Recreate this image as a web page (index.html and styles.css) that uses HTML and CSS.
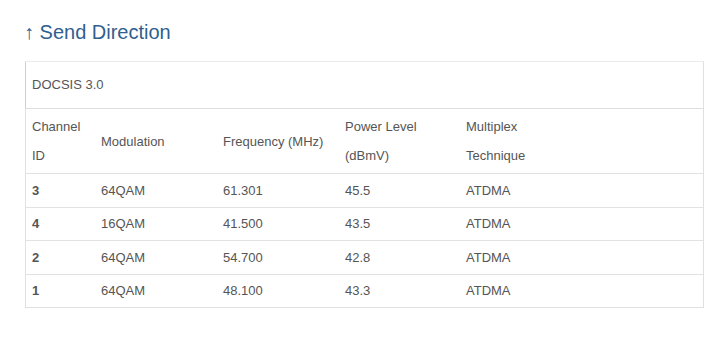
FILE: index.html
```html
<!DOCTYPE html>
<html>
<head>
<meta charset="utf-8">
<link rel="stylesheet" href="styles.css">
</head>
<body>
<div class="page">
  <h2 class="title">↑ Send Direction</h2>
  <div class="panel">
    <div class="panel-heading">DOCSIS 3.0</div>
    <table class="channels">
      <colgroup>
        <col class="c1"><col class="c2"><col class="c3"><col class="c4"><col class="c5">
      </colgroup>
      <thead>
        <tr>
          <th>Channel<br>ID</th>
          <th>Modulation</th>
          <th>Frequency (MHz)</th>
          <th>Power Level<br>(dBmV)</th>
          <th>Multiplex<br>Technique</th>
        </tr>
      </thead>
      <tbody>
        <tr><td class="id">3</td><td>64QAM</td><td>61.301</td><td>45.5</td><td>ATDMA</td></tr>
        <tr><td class="id">4</td><td>16QAM</td><td>41.500</td><td>43.5</td><td>ATDMA</td></tr>
        <tr><td class="id">2</td><td>64QAM</td><td>54.700</td><td>42.8</td><td>ATDMA</td></tr>
        <tr><td class="id">1</td><td>64QAM</td><td>48.100</td><td>43.3</td><td>ATDMA</td></tr>
      </tbody>
    </table>
  </div>
</div>
</body>
</html>
```

FILE: styles.css
```css
html, body {
  margin: 0;
  padding: 0;
  background: #fff;
}
body {
  font-family: "Liberation Sans", Arial, sans-serif;
  color: #555;
}
.page {
  padding: 20px 0 0 24px;
}
.title {
  margin: 0;
  font-size: 20px;
  line-height: 24px;
  font-weight: normal;
  color: #30608f;
}
.panel {
  margin: 17px 0 0 1px;
  width: 677px;
  border: 1px solid #e0e0e0;
  border-top-color: #ececec;
}
.panel-heading {
  height: 46px;
  line-height: 46px;
  padding: 0 6px;
  font-size: 13px;
  border-bottom: 1px solid #dedede;
  border-left: 1px solid #cfcfcf;
  margin-left: -1px;
  color: #555;
}
.channels {
  width: 100%;
  border-collapse: collapse;
  table-layout: fixed;
  font-size: 13px;
}
.c1 { width: 69px; }
.c2 { width: 122px; }
.c3 { width: 122px; }
.c4 { width: 121px; }
.channels th {
  font-weight: normal;
  text-align: left;
  vertical-align: middle;
  line-height: 29px;
  padding: 3px 6px 3px;
  color: #555;
}
.channels td {
  line-height: 20px;
  padding: 6.5px 6px 6px;
  border-top: 1px solid #e2e2e2;
  color: #555;
}
.channels td.id {
  font-weight: bold;
}
```
